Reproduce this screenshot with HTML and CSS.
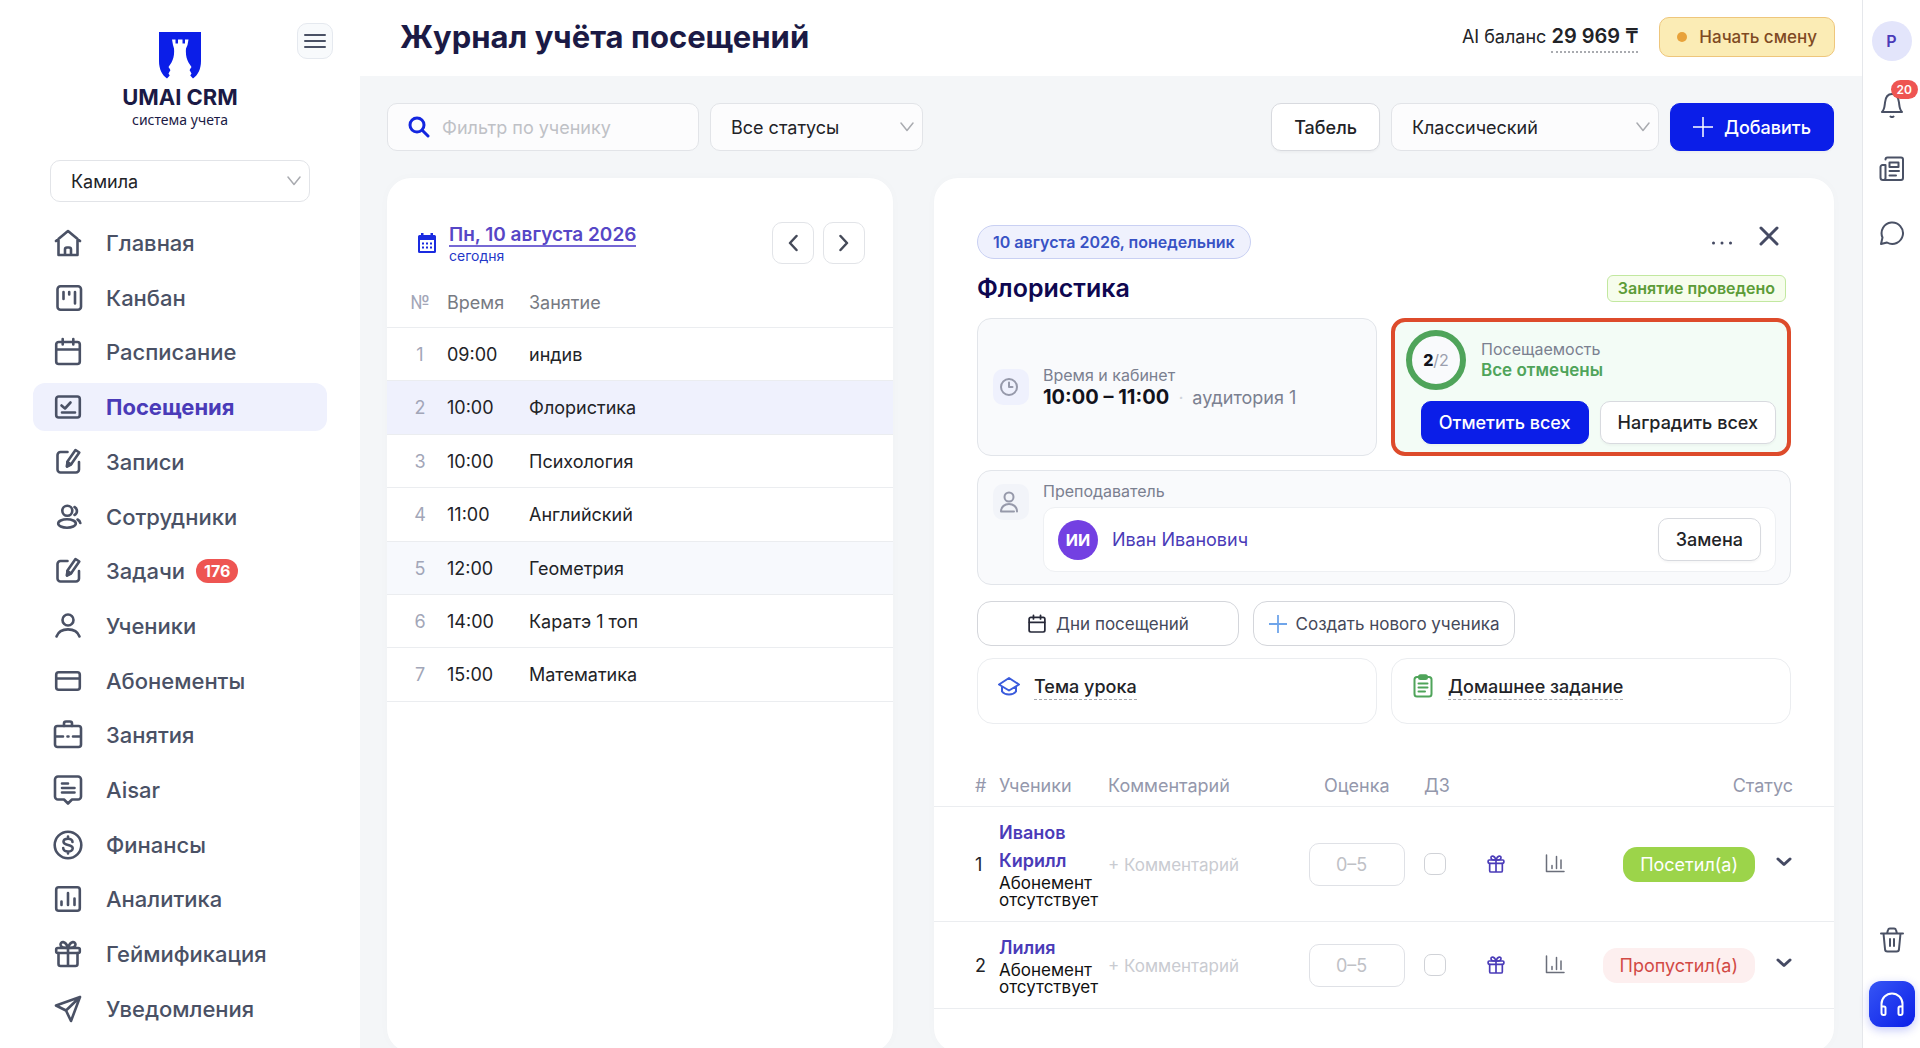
FILE: index.html
```html
<!DOCTYPE html>
<html lang="ru">
<head>
    <meta charset="UTF-8">
    <meta name="viewport" content="width=device-width, initial-scale=1.0">
    <title>Журнал учёта посещений</title>
    <link rel="stylesheet" href="styles.css">
</head>
<body>
    <svg class="sprite" aria-hidden="true">
        <symbol id="i-edit" viewBox="0 0 30 30"><path d="M14.5 5H7.5a3 3 0 0 0-3 3v14.5a3 3 0 0 0 3 3H23a3 3 0 0 0 3-3V15M22.5 3l3.8 2.5-8 11.5-4.3 2.5.5-5z"/><path d="M14.5 15l3.5 2.5-4 2z"/></symbol>
        <symbol id="i-calendar" viewBox="0 0 30 30"><rect x="3.2" y="5" width="23.6" height="22" rx="2.5"/><path d="M3.5 12.5h23M9.7 2v5.5M20.3 2v5.5"/></symbol>
        <symbol id="i-gift" viewBox="0 0 30 30"><rect x="3.2" y="9" width="23.6" height="5" rx="1.5"/><path d="M5.5 14v11a2 2 0 0 0 2 2h15a2 2 0 0 0 2-2V14M15 9v18M15 9c-4 0-7.5-.5-7.5-3.5S12.5 1 15 9zM15 9c4 0 7.5-.5 7.5-3.5S17.5 1 15 9z"/></symbol>
        <symbol id="i-chart" viewBox="0 0 20 20"><path d="M1.5 1v16.5H19M7 11.5v3M11.5 2.5v12M16 6v8.5"/></symbol>
        <symbol id="i-arrow" viewBox="0 0 14 10"><path d="M1 1l6 7.5L13 1"/></symbol>
        <symbol id="i-chevron" viewBox="0 0 16 10"><path d="M2 2l6 5.5L14 2"/></symbol>
        <symbol id="i-plus" viewBox="0 0 20 20"><path d="M10 0v20M0 10h20"/></symbol>
    </svg>

    <div class="app">
        <aside class="sidebar">
            <div class="sidebar-top">
                <a class="logo" href="#">
                    <svg class="logo-mark" viewBox="0 0 42 47" aria-hidden="true">
                        <path fill="#0b1ee8" d="M0 0h42v29c0 8-3 14-8 17.5L29 41l3-7-4 3H14l-4-3 3 7-5 5.5C3 43 0 37 0 29z"/>
                        <path fill="#fff" d="M13 7.5h3.5v4H19v-4h4.5v4H26v-4h3.5l-1 5.5-1.5 3.5c-.5 6 .5 10 2.5 14l3 4.5-2 3 2 3.5-4 6.5h-15l-4-6.5 2-3.5-2-3 3-4.5c2-4 3-8 2.5-14L14 13z"/>
                    </svg>
                    <span class="logo-name">UMAI CRM</span>
                    <span class="logo-sub">система учета</span>
                </a>
                <button class="menu-btn" type="button" aria-label="Меню">
                    <svg viewBox="0 0 22 22"><path d="M1 5h20M1 11h20M1 17h20"/></svg>
                </button>
            </div>

            <div class="select branch">
                <select aria-label="Филиал"><option>Камила</option></select>
                <svg class="arrow"><use href="#i-arrow"/></svg>
            </div>

            <nav class="nav">
                <a href="#"><svg viewBox="0 0 30 30"><path d="M3 13L15 3l12 10M5.5 11v16h19V11M12 27v-5.5a2 2 0 0 1 2-2h2a2 2 0 0 1 2 2V27"/></svg>Главная</a>
                <a href="#"><svg viewBox="0 0 30 30"><rect x="4.5" y="3.2" width="23.5" height="23.6" rx="3"/><path d="M10.5 9v7M16.2 9v2.5M22 9v11.5"/></svg>Канбан</a>
                <a href="#"><svg><use href="#i-calendar"/></svg>Расписание</a>
                <a href="#" class="active"><svg viewBox="0 0 30 30"><rect x="3.2" y="4.5" width="23.6" height="21" rx="2.5"/><path d="M8.5 13.5l3.5 3 5.5-6M9 20.5h13"/></svg>Посещения</a>
                <a href="#"><svg><use href="#i-edit"/></svg>Записи</a>
                <a href="#"><svg viewBox="0 0 30 30"><circle cx="14.3" cy="8.7" r="5"/><ellipse cx="14" cy="21.5" rx="8.8" ry="4.2"/><path d="M21.5 5a4.5 4.5 0 0 1 0 8M24.5 17.5c1.5.8 2.5 2 2.8 3.5"/></svg>Сотрудники</a>
                <a href="#"><svg><use href="#i-edit"/></svg>Задачи <span class="badge">176</span></a>
                <a href="#"><svg viewBox="0 0 30 30"><circle cx="15" cy="9" r="5.5"/><path d="M3.5 25.5c3.5-9.5 19.5-9.5 23 0"/></svg>Ученики</a>
                <a href="#"><svg viewBox="0 0 30 30"><rect x="3.2" y="6.2" width="23.6" height="17.6" rx="2.5"/><path d="M3.5 12.5h23"/></svg>Абонементы</a>
                <a href="#"><svg viewBox="0 0 30 30"><rect x="2" y="6" width="26" height="21" rx="2.5"/><path d="M11 6V3.5a2 2 0 0 1 2-2h4a2 2 0 0 1 2 2V6M2.5 16.5H10M20 16.5h7.5M14.5 16.5h1"/></svg>Занятия</a>
                <a href="#"><svg viewBox="0 0 30 30"><path d="M5 1.5h20a3 3 0 0 1 3 3v17a3 3 0 0 1-3 3h-6l-4 4-4-4H5a3 3 0 0 1-3-3v-17a3 3 0 0 1 3-3zM9 8.5h6M9 13h12.5M9 17.5h12.5"/></svg>Aisar</a>
                <a href="#"><svg viewBox="0 0 30 30"><circle cx="15" cy="15" r="13.3"/><path d="M19.5 12c0-2-2-3.3-4.5-3.3s-4.5 1-4.5 3c0 4.5 9.2 2 9.2 6.5 0 2-2.2 3.3-4.7 3.3s-4.8-1.3-4.8-3.5M15 6.5v2M15 21.5v2"/></svg>Финансы</a>
                <a href="#"><svg viewBox="0 0 30 30"><rect x="3.2" y="3.2" width="23.6" height="23.6" rx="2.5"/><path d="M8.5 17.5V21M15 9v12M21.5 14.5V21"/></svg>Аналитика</a>
                <a href="#"><svg><use href="#i-gift"/></svg>Геймификация</a>
                <a href="#"><svg viewBox="0 0 30 30"><path d="M27 3L3 11.5l10 5L18 27zM27 3L13 16.5"/></svg>Уведомления</a>
            </nav>
        </aside>

        <main class="main">
            <header class="header">
                <h1>Журнал учёта посещений</h1>
                <div class="balance">AI баланс <a href="#">29 969 ₸</a></div>
                <button class="shift-btn" type="button"><span class="dot"></span>Начать смену</button>
            </header>

            <div class="content">
                <div class="toolbar">
                    <label class="search">
                        <svg viewBox="0 0 22 22"><circle cx="9" cy="9" r="7"/><path d="M14.5 14.5L20 20"/></svg>
                        <input type="text" placeholder="Фильтр по ученику" aria-label="Фильтр по ученику">
                    </label>
                    <div class="select status-select">
                        <select aria-label="Статус"><option>Все статусы</option></select>
                        <svg class="arrow"><use href="#i-arrow"/></svg>
                    </div>
                    <button class="btn btn-lg sheet-btn" type="button">Табель</button>
                    <div class="select view-select">
                        <select aria-label="Вид журнала"><option>Классический</option></select>
                        <svg class="arrow"><use href="#i-arrow"/></svg>
                    </div>
                    <button class="btn btn-lg btn-primary add-btn" type="button"><svg><use href="#i-plus"/></svg>Добавить</button>
                </div>

                <div class="panels">
                    <section class="panel">
                        <div class="day">
                            <svg class="day-icon" viewBox="0 0 20 22"><path fill="#1a2be0" d="M4 1h2.5v2h7V1H16v2h1.5A1.5 1.5 0 0 1 19 4.5v15a1.5 1.5 0 0 1-1.5 1.5h-15A1.5 1.5 0 0 1 1 19.5v-15A1.5 1.5 0 0 1 2.5 3H4z"/><path fill="#fff" d="M3 8h14v11H3z"/><path stroke="#1a2be0" stroke-width="2" stroke-dasharray="2 2" d="M5 11.5h10M5 15.5h10"/></svg>
                            <div class="day-text">
                                <a href="#">Пн, 10 августа 2026</a>
                                <span>сегодня</span>
                            </div>
                            <button class="nav-btn" type="button" aria-label="Предыдущий день"><svg viewBox="0 0 10 18"><path d="M8.5 2L2 9l6.5 7"/></svg></button>
                            <button class="nav-btn" type="button" aria-label="Следующий день"><svg viewBox="0 0 10 18"><path d="M1.5 2L8 9l-6.5 7"/></svg></button>
                        </div>
                        <table class="lessons-table">
                            <thead>
                                <tr><th class="num">№</th><th class="time">Время</th><th>Занятие</th></tr>
                            </thead>
                            <tbody>
                                <tr><td class="num">1</td><td>09:00</td><td>индив</td></tr>
                                <tr class="selected"><td class="num">2</td><td>10:00</td><td>Флористика</td></tr>
                                <tr><td class="num">3</td><td>10:00</td><td>Психология</td></tr>
                                <tr><td class="num">4</td><td>11:00</td><td>Английский</td></tr>
                                <tr class="hover"><td class="num">5</td><td>12:00</td><td>Геометрия</td></tr>
                                <tr><td class="num">6</td><td>14:00</td><td>Каратэ 1 топ</td></tr>
                                <tr><td class="num">7</td><td>15:00</td><td>Математика</td></tr>
                            </tbody>
                        </table>
                    </section>

                    <section class="panel">
                        <div class="lesson-info">
                            <div class="lesson-top">
                                <span class="date-pill">10 августа 2026, понедельник</span>
                                <button class="plain-btn more" type="button" aria-label="Ещё"><svg viewBox="0 0 24 24"><path d="M2.5 13h.01M11 13h.01M19.5 13h.01"/></svg></button>
                                <button class="plain-btn close" type="button" aria-label="Закрыть"><svg viewBox="0 0 20 20"><path d="M2 2l16 16M18 2L2 18"/></svg></button>
                            </div>
                            <div class="lesson-title">
                                <h2>Флористика</h2>
                                <span class="done-tag">Занятие проведено</span>
                            </div>

                            <div class="two-cols">
                                <div class="box time-box">
                                    <span class="tile"><svg viewBox="0 0 20 20"><circle cx="10" cy="10" r="8"/><path d="M10 5.5V10h3.5"/></svg></span>
                                    <div>
                                        <div class="caption">Время и кабинет</div>
                                        <div class="time-line"><b>10:00 – 11:00</b><i>·</i><span>аудитория 1</span></div>
                                    </div>
                                </div>
                                <div class="box attendance">
                                    <div class="attendance-head">
                                        <div class="ring"><b>2</b>/2</div>
                                        <div>
                                            <div class="caption">Посещаемость</div>
                                            <div class="all-marked">Все отмечены</div>
                                        </div>
                                    </div>
                                    <div class="attendance-actions">
                                        <button class="btn btn-primary" type="button">Отметить всех</button>
                                        <button class="btn" type="button">Наградить всех</button>
                                    </div>
                                </div>
                            </div>

                            <div class="box teacher-box">
                                <span class="tile tile-pale"><svg viewBox="0 0 20 24"><circle cx="10" cy="7" r="4.5"/><path d="M2 21.5c0-10 16-10 16 0M2 21.5h13"/></svg></span>
                                <div class="teacher-body">
                                    <div class="caption">Преподаватель</div>
                                    <div class="teacher">
                                        <span class="teacher-avatar">ИИ</span>
                                        <a href="#">Иван Иванович</a>
                                        <button class="btn" type="button">Замена</button>
                                    </div>
                                </div>
                            </div>

                            <div class="quick">
                                <button class="quick-btn" type="button"><svg class="days-icon"><use href="#i-calendar"/></svg>Дни посещений</button>
                                <button class="quick-btn" type="button"><svg class="create-icon"><use href="#i-plus"/></svg>Создать нового ученика</button>
                            </div>

                            <div class="two-cols">
                                <div class="topic">
                                    <svg class="topic-icon" viewBox="0 0 24 24"><path d="M12 4l10 6.5-10 6-10-6zM5 12.5v5c3 4 11 4 14 0v-5"/></svg>
                                    <a href="#">Тема урока</a>
                                </div>
                                <div class="topic">
                                    <svg class="topic-icon homework" viewBox="0 0 24 24"><rect x="3.5" y="3" width="17" height="19.5" rx="2.5"/><rect x="8" y="1.2" width="8" height="3.8" rx="1.5"/><path d="M7.5 9.5h9M7.5 13.5h9M7.5 17.5H14"/></svg>
                                    <a href="#">Домашнее задание</a>
                                </div>
                            </div>
                        </div>

                        <table class="students">
                            <colgroup>
                                <col class="w-num">
                                <col class="w-name">
                                <col>
                                <col class="w-grade">
                                <col class="w-hw">
                                <col class="w-gift">
                                <col class="w-chart">
                                <col class="w-state">
                                <col class="w-more">
                            </colgroup>
                            <thead>
                                <tr>
                                    <th class="c-num">#</th>
                                    <th>Ученики</th>
                                    <th>Комментарий</th>
                                    <th class="c-grade">Оценка</th>
                                    <th>ДЗ</th>
                                    <th></th>
                                    <th></th>
                                    <th class="c-status" colspan="2">Статус</th>
                                </tr>
                            </thead>
                            <tbody>
                                <tr>
                                    <td class="c-num">1</td>
                                    <td class="c-name"><a class="student" href="#">Иванов Кирилл</a><div class="sub">Абонемент отсутствует</div></td>
                                    <td><a class="comment" href="#">+ Комментарий</a></td>
                                    <td><input class="grade" type="text" placeholder="0–5" aria-label="Оценка, Иванов Кирилл"></td>
                                    <td><input class="check" type="checkbox" aria-label="ДЗ, Иванов Кирилл"></td>
                                    <td><button class="plain-btn gift" type="button" aria-label="Наградить"><svg><use href="#i-gift"/></svg></button></td>
                                    <td><button class="plain-btn stat" type="button" aria-label="Статистика"><svg><use href="#i-chart"/></svg></button></td>
                                    <td class="c-state"><span class="state came">Посетил(а)</span></td>
                                    <td class="c-more"><button class="plain-btn expand" type="button" aria-label="Развернуть"><svg><use href="#i-chevron"/></svg></button></td>
                                </tr>
                                <tr>
                                    <td class="c-num">2</td>
                                    <td class="c-name"><a class="student" href="#">Лилия</a><div class="sub">Абонемент отсутствует</div></td>
                                    <td><a class="comment" href="#">+ Комментарий</a></td>
                                    <td><input class="grade" type="text" placeholder="0–5" aria-label="Оценка, Лилия"></td>
                                    <td><input class="check" type="checkbox" aria-label="ДЗ, Лилия"></td>
                                    <td><button class="plain-btn gift" type="button" aria-label="Наградить"><svg><use href="#i-gift"/></svg></button></td>
                                    <td><button class="plain-btn stat" type="button" aria-label="Статистика"><svg><use href="#i-chart"/></svg></button></td>
                                    <td class="c-state"><span class="state missed">Пропустил(а)</span></td>
                                    <td class="c-more"><button class="plain-btn expand" type="button" aria-label="Развернуть"><svg><use href="#i-chevron"/></svg></button></td>
                                </tr>
                            </tbody>
                        </table>
                    </section>
                </div>
            </div>
        </main>

        <aside class="rail">
            <a class="profile" href="#">P</a>
            <a class="rail-link" href="#" aria-label="Уведомления">
                <svg viewBox="0 0 26 26"><path d="M3 20h20c-2.5-2.5-2.5-5.5-3-9.5C19.5 5.5 17 2 13 2S6.5 5.5 6 10.5C5.5 14.5 5.5 17.5 3 20zM11.5 24.5c1 .8 2 .8 3 0"/></svg>
                <span class="rail-badge">20</span>
            </a>
            <a class="rail-link" href="#" aria-label="Новости">
                <svg viewBox="0 0 26 26"><path d="M6.5 3.5a2 2 0 0 1 2-2H22a2 2 0 0 1 2 2V22a2 2 0 0 1-2 2H4A2.5 2.5 0 0 1 1.5 21.5V11a2 2 0 0 1 2-2h3v13a2 2 0 0 1-2 2M10.5 6.5h9V11h-9zM10.5 15H20M10.5 19.5H17"/></svg>
            </a>
            <a class="rail-link" href="#" aria-label="Чат">
                <svg viewBox="0 0 26 26"><path d="M2 24l1.5-6.5A10.7 10.7 0 1 1 8 22.5z"/></svg>
            </a>
            <a class="rail-link trash" href="#" aria-label="Корзина">
                <svg viewBox="0 0 26 26"><path d="M2 6.5h22M4.5 6.5L6 22a2.5 2.5 0 0 0 2.5 2.5h9A2.5 2.5 0 0 0 20 22l1.5-15.5M8 6.5L9 3a2 2 0 0 1 2-1.5h4A2 2 0 0 1 17 3l1 3.5M11 12v7M15 12v7"/></svg>
            </a>
            <button class="support" type="button" aria-label="Поддержка">
                <svg viewBox="0 0 26 26"><path d="M2.5 22V13a10.5 10.5 0 0 1 21 0v9M2.5 15.5H5A1.5 1.5 0 0 1 6.5 17v5.5A1.5 1.5 0 0 1 5 24h-.5a2 2 0 0 1-2-2M23.5 15.5H21a1.5 1.5 0 0 0-1.5 1.5v5.5A1.5 1.5 0 0 0 21 24h.5a2 2 0 0 0 2-2"/></svg>
            </button>
        </aside>
    </div>
</body>
</html>
```
FILE: styles.css
```css
* {
    box-sizing: border-box;
}
body {
    margin: 0;
    font-family: Inter, "Noto Sans", sans-serif;
    font-size: 18px;
    color: #222327;
    background: #fff;
}
a {
    color: inherit;
    text-decoration: none;
}
button,
input,
select {
    font: inherit;
    color: inherit;
}
button {
    cursor: pointer;
}
svg {
    flex: none;
    fill: none;
    stroke: currentColor;
    stroke-width: 2;
    stroke-linecap: round;
    stroke-linejoin: round;
}
.sprite {
    display: none;
}
.app {
    display: flex;
    height: 100vh;
    overflow: hidden;
}

/* sidebar */
.sidebar {
    display: flex;
    flex-direction: column;
    width: 360px;
    flex: none;
    padding: 23px 33px 15px;
}
.sidebar-top {
    display: grid;
    grid-template-columns: 36px 1fr 36px;
    align-items: start;
    margin: 0 -6px;
}
.logo {
    grid-column: 2;
    display: flex;
    flex-direction: column;
    align-items: center;
    padding-top: 9px;
    color: #1b1a45;
}
.logo-mark {
    width: 42px;
    height: 47px;
    stroke: none;
}
.logo-name {
    margin-top: 5px;
    font-size: 22px;
    font-weight: 700;
    line-height: 27px;
}
.logo-sub {
    font-family: "Noto Sans", sans-serif;
    font-size: 14px;
    line-height: 17px;
}
.menu-btn {
    display: grid;
    place-items: center;
    width: 36px;
    height: 36px;
    padding: 0;
    border: 1px solid #e5e9ef;
    border-radius: 10px;
    background: #f8fafc;
    color: #4a5165;
}
.menu-btn svg {
    width: 22px;
    height: 22px;
}

/* select with its own arrow */
.select {
    display: grid;
    align-items: center;
}
.select select,
.select .arrow {
    grid-area: 1 / 1;
}
.select select {
    width: 100%;
    height: 48px;
    padding: 0 20px;
    border: 1px solid #e2e4e8;
    border-radius: 10px;
    background: #fcfcfd;
    appearance: none;
}
.arrow {
    justify-self: end;
    width: 14px;
    height: 10px;
    margin-right: 9px;
    color: #a9abb0;
    stroke-width: 1.5;
    pointer-events: none;
}
.branch {
    margin: 32px 17px 17px;
}
.branch select {
    height: 42px;
    background: #fff;
}

.nav {
    display: flex;
    flex: 1;
    flex-direction: column;
    justify-content: space-between;
}
.nav a {
    display: flex;
    align-items: center;
    height: 48px;
    padding-left: 20px;
    border-radius: 12px;
    color: #4a5165;
    font-size: 22px;
    font-weight: 500;
}
.nav svg {
    width: 30px;
    height: 30px;
    margin-right: 23px;
    stroke-width: 2.6;
}
.nav .active {
    background: #eff1fd;
    color: #4a3bb8;
    font-weight: 700;
}
.nav .active svg {
    color: #4a5165;
}
.badge {
    margin-left: 11px;
    padding: 0 8px;
    border-radius: 12px;
    background: #ee5552;
    color: #fff;
    font-size: 16px;
    font-weight: 700;
    line-height: 24px;
}

/* main area */
.main {
    display: flex;
    flex: 1;
    flex-direction: column;
    min-width: 0;
}
.header {
    display: flex;
    flex: none;
    align-items: center;
    height: 76px;
    padding: 0 27px 3px 40px;
}
h1 {
    flex: 1;
    margin: 0;
    color: #1b1a45;
    font-size: 31px;
    font-weight: 700;
}
.balance a {
    display: inline-block;
    border-bottom: 2px dotted #a9abb0;
    font-size: 20px;
    font-weight: 600;
    line-height: 30px;
}
.shift-btn {
    display: flex;
    align-items: center;
    gap: 12px;
    height: 40px;
    margin-left: 21px;
    padding: 0 17px;
    border: 1px solid #eec67c;
    border-radius: 10px;
    background: #fbecb5;
    color: #7f4a23;
    font-size: 17px;
    font-weight: 500;
}
.dot {
    width: 10px;
    height: 10px;
    border-radius: 50%;
    background: #e8a23a;
}
.content {
    flex: 1;
    padding: 27px 28px 0 27px;
    background: #f4f6f8;
}
.toolbar {
    display: flex;
    gap: 11px;
}
.search {
    display: flex;
    align-items: center;
    width: 312px;
    height: 48px;
    padding: 0 20px;
    border: 1px solid #e2e4e8;
    border-radius: 10px;
    background: #fcfcfd;
}
.search svg {
    width: 22px;
    height: 22px;
    margin-right: 12px;
    color: #1326e0;
    stroke-width: 3;
}
.search input {
    flex: 1;
    min-width: 0;
    padding: 0;
    border: 0;
    outline: 0;
    background: none;
}
::placeholder {
    color: #bfc1c6;
    opacity: 1;
}
.status-select {
    width: 213px;
}
.view-select {
    width: 268px;
}
.sheet-btn {
    margin-left: auto;
}
.btn {
    height: 43px;
    padding: 0 17px;
    border: 1px solid #d8dadf;
    border-radius: 10px;
    background: #fff;
    box-shadow: 0 2px 2px rgba(0, 0, 0, 0.03);
    font-weight: 500;
}
.btn-lg {
    height: 48px;
    padding: 0 22px;
}
.btn-primary {
    border-color: #0b1ee8;
    background: #0b1ee8;
    color: #fff;
}
.add-btn {
    display: flex;
    align-items: center;
    gap: 11px;
}
.add-btn svg {
    width: 20px;
    height: 20px;
    stroke-width: 1.5;
}

.panels {
    display: grid;
    grid-template-columns: 506fr 900fr;
    gap: 41px;
    margin-top: 27px;
}
.panel {
    min-height: calc(100vh - 174px);
    border-radius: 24px;
    background: #fff;
    box-shadow: 0 0 12px rgba(20, 30, 60, 0.02);
}

/* lessons of the day */
.day {
    display: flex;
    align-items: center;
    padding: 43px 28px 0 30px;
}
.day-icon {
    width: 20px;
    height: 22px;
    margin-right: 12px;
    stroke: none;
    stroke-linecap: butt;
}
.day-text {
    display: flex;
    flex: 1;
    flex-direction: column;
    align-items: flex-start;
    padding-top: 4px;
}
.day-text a {
    border-bottom: 2px solid #7668d4;
    color: #5646c6;
    font-size: 19px;
    font-weight: 600;
    line-height: 20px;
}
.day-text span {
    color: #2438c8;
    font-size: 14px;
    line-height: 18px;
}
.nav-btn {
    display: grid;
    place-items: center;
    width: 42px;
    height: 42px;
    margin-left: 9px;
    padding: 0;
    border: 1px solid #e2e4e8;
    border-radius: 10px;
    background: #fff;
    color: #454a59;
}
.nav-btn svg {
    width: 10px;
    height: 18px;
    stroke-width: 2.5;
}
table {
    width: 100%;
    border-spacing: 0;
}
th,
td {
    padding: 0;
    border-bottom: 1px solid #ebedf0;
}
th {
    font-weight: 400;
    text-align: left;
}
.lessons-table {
    margin-top: 12px;
}
.lessons-table th {
    height: 51px;
    color: #777a82;
}
.lessons-table td {
    padding: 15px 0 14px;
    line-height: 1.3;
}
.lessons-table .num {
    width: 60px;
    padding-left: 6px;
    color: #a2a6b8;
    text-align: center;
}
.lessons-table .time {
    width: 82px;
}
.selected td {
    background: #eff1fd;
}
.hover td {
    background: #f7f9fd;
}

/* lesson card */
.lesson-info {
    padding: 47px 43px 0;
}
.lesson-top,
.lesson-title {
    display: flex;
    align-items: center;
}
.date-pill {
    margin-right: auto;
    padding: 0 15px;
    border: 1px solid #c9d0f3;
    border-radius: 17px;
    background: #eff1fd;
    color: #3852c4;
    font-size: 16px;
    font-weight: 600;
    line-height: 32px;
}
.plain-btn {
    display: grid;
    place-items: center;
    padding: 0;
    border: 0;
    background: none;
    color: #454a63;
}
.more svg {
    width: 24px;
    height: 24px;
    stroke-width: 3;
}
.close {
    margin: 0 12px 12px 24px;
}
.close svg {
    width: 20px;
    height: 20px;
    stroke-width: 3;
}
h2 {
    margin: 0;
    color: #0e0750;
    font-size: 25px;
    font-weight: 600;
    line-height: 59px;
}
.done-tag {
    margin-left: auto;
    margin-right: 5px;
    padding: 0 10px;
    border: 1px solid #c2e8a0;
    border-radius: 6px;
    background: #f6fdec;
    color: #5c9c38;
    font-size: 16px;
    font-weight: 600;
    line-height: 25px;
}
.two-cols {
    display: grid;
    grid-template-columns: 1fr 1fr;
    gap: 14px;
}
.box {
    border: 1px solid #e2e5ea;
    border-radius: 14px;
    background: #f9fafc;
}
.caption {
    color: #7b8090;
    font-size: 16px;
    line-height: 20px;
}
.tile {
    display: grid;
    place-items: center;
    flex: none;
    width: 36px;
    height: 36px;
    padding-right: 4px;
    border-radius: 10px;
    background: #eff1fd;
    color: #9699aa;
}
.tile svg {
    width: 20px;
    height: 24px;
}
.tile-pale {
    margin-top: 3px;
    background: #f2f4f9;
}
.time-box {
    display: flex;
    align-items: center;
    gap: 14px;
    padding: 0 15px;
}
.time-line {
    display: flex;
    align-items: baseline;
    color: #7b8090;
    line-height: 24px;
}
.time-line b {
    color: #12131c;
    font-size: 20px;
    font-weight: 700;
}
.time-line i {
    margin: 0 9px;
    color: #d0d3da;
}
.attendance {
    padding: 8px 11px;
    border: 4px solid #dd4b2b;
    background: #f3fcf6;
}
.attendance-head {
    display: flex;
    align-items: center;
    gap: 15px;
}
.ring {
    display: flex;
    align-items: center;
    justify-content: center;
    width: 60px;
    height: 60px;
    border: 6px solid #4fa45a;
    border-radius: 50%;
    background: #f9fafc;
    color: #9b9fae;
    font-size: 16px;
}
.ring b {
    color: #12131c;
    font-weight: 800;
}
.all-marked {
    color: #4fa45a;
    font-size: 17px;
    font-weight: 600;
    line-height: 22px;
}
.attendance-actions {
    display: flex;
    justify-content: flex-end;
    gap: 11px;
    margin-top: 11px;
}
.teacher-box {
    display: flex;
    gap: 14px;
    margin-top: 14px;
    padding: 10px 14px 12px 15px;
}
.teacher-body {
    flex: 1;
}
.teacher {
    display: flex;
    align-items: center;
    gap: 14px;
    margin-top: 6px;
    padding: 10px 14px;
    border: 1px solid #eef0f3;
    border-radius: 12px;
    background: #fff;
}
.teacher a {
    flex: 1;
    color: #4a3bb8;
}
.teacher-avatar {
    width: 40px;
    border-radius: 50%;
    background: #7340e2;
    color: #fff;
    font-size: 16px;
    font-weight: 700;
    line-height: 40px;
    text-align: center;
}
.quick {
    display: flex;
    gap: 14px;
    margin: 16px 0 12px;
}
.quick-btn {
    display: flex;
    align-items: center;
    justify-content: center;
    gap: 9px;
    width: 262px;
    height: 45px;
    padding: 0;
    border: 1px solid #d4d6db;
    border-radius: 14px;
    background: #fff;
    color: #45485a;
    font-size: 17px;
    white-space: nowrap;
}
.days-icon {
    width: 20px;
    height: 20px;
    color: #262838;
    stroke-width: 2.6;
}
.create-icon {
    width: 18px;
    height: 18px;
    color: #6fa5ea;
}
.topic {
    display: flex;
    align-items: flex-start;
    gap: 13px;
    height: 66px;
    padding: 15px 19px;
    border: 1px solid #ebedf0;
    border-radius: 16px;
    font-weight: 500;
}
.topic-icon {
    width: 24px;
    height: 24px;
    color: #3a5bdc;
}
.homework {
    color: #4fa45a;
}
.topic a {
    border-bottom: 1px dashed #a9abb0;
    line-height: 25px;
}

/* students */
.students {
    margin-top: 40px;
    table-layout: fixed;
}
.students th {
    height: 43px;
    color: #9498ac;
}
.students td {
    height: 87px;
}
.w-num {
    width: 65px;
}
.w-name {
    width: 109px;
}
.w-grade {
    width: 115px;
}
.w-hw {
    width: 62px;
}
.w-gift {
    width: 59px;
}
.w-chart {
    width: 50px;
}
.w-state {
    width: 160px;
}
.w-more {
    width: 79px;
}
.students .c-num {
    padding-left: 41px;
}
.students th.c-grade {
    padding-left: 15px;
}
.students th.c-status {
    padding-right: 41px;
    text-align: right;
}
.students .c-name {
    padding: 12px 0;
}
.student {
    display: block;
    width: 90px;
    color: #4a3bb8;
    font-weight: 600;
    line-height: 28px;
}
.sub {
    color: #111;
    font-size: 17px;
    line-height: 17px;
}
.comment {
    color: #c9cbd1;
    font-size: 17px;
}
.grade {
    display: block;
    width: 96px;
    height: 43px;
    padding: 0 26px;
    border: 1px solid #dfe1e6;
    border-radius: 10px;
    background: #fff;
}
.check {
    display: block;
    width: 22px;
    height: 22px;
    margin: 0;
    border: 1px solid #d0d2d7;
    border-radius: 7px;
    appearance: none;
}
.gift {
    color: #4a3bb8;
}
.gift svg {
    width: 20px;
    height: 20px;
    stroke-width: 2.5;
}
.stat {
    color: #6a6e7a;
}
.stat svg {
    width: 20px;
    height: 20px;
    stroke-width: 1.5;
}
.c-state {
    text-align: right;
}
.state {
    display: inline-block;
    padding: 0 17px;
    border-radius: 14px;
    line-height: 35px;
}
.came {
    background: #9cd44a;
    color: #fff;
}
.missed {
    background: #fdefef;
    color: #d24a45;
}
.students .c-more {
    padding: 0 0 5px 21px;
}
.expand svg {
    width: 16px;
    height: 10px;
    stroke-width: 3;
}

/* right rail */
.rail {
    display: flex;
    flex: none;
    flex-direction: column;
    align-items: center;
    width: 58px;
    padding: 21px 0;
    border-left: 1px solid #e5e7eb;
    color: #4a5165;
}
.profile {
    width: 40px;
    margin-bottom: 31px;
    border-radius: 50%;
    background: #e3e5fb;
    color: #4a3bb8;
    font-size: 16px;
    font-weight: 600;
    line-height: 40px;
    text-align: center;
}
.rail-link {
    position: relative;
    height: 26px;
    margin-bottom: 38px;
}
.rail-link svg {
    width: 26px;
    height: 26px;
}
.rail-badge {
    position: absolute;
    top: -12px;
    left: 12px;
    padding: 0 6px;
    border-radius: 10px;
    background: #ee5552;
    color: #fff;
    font-size: 12px;
    font-weight: 600;
    line-height: 19px;
}
.trash {
    margin-top: auto;
    margin-bottom: 28px;
}
.support {
    display: grid;
    place-items: center;
    width: 46px;
    height: 46px;
    padding: 0;
    border: 0;
    border-radius: 12px;
    background: linear-gradient(135deg, #3656f5, #0b1ee8);
    box-shadow: 0 3px 10px rgba(20, 40, 230, 0.25);
    color: #fff;
}
.support svg {
    width: 26px;
    height: 26px;
}
```
